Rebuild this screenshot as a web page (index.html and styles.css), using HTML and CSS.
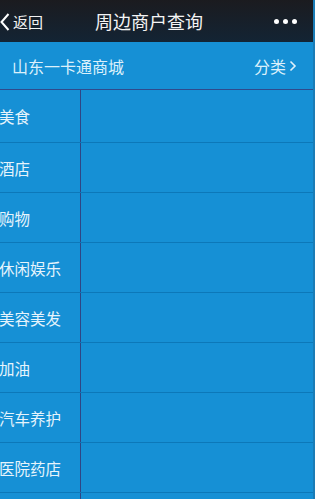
FILE: index.html
```html
<!DOCTYPE html>
<html lang="zh">
<head>
<meta charset="utf-8">
<link rel="stylesheet" href="styles.css">
</head>
<body>
<div class="app">
  <header class="topbar">
    <div class="back">
      <svg class="chev" width="10" height="20" viewBox="0 0 10 20"><path d="M8.5 2 L1.5 10 L8.5 18" fill="none" stroke="#fff" stroke-width="2"/></svg>
      <span>返回</span>
    </div>
    <div class="title">周边商户查询</div>
    <div class="more"><i></i><i></i><i></i></div>
  </header>
  <div class="subbar">
    <span class="shop">山东一卡通商城</span>
    <span class="cat">分类<svg width="8" height="12" viewBox="0 0 8 12"><path d="M1.5 1.5 L6 6 L1.5 10.5" fill="none" stroke="#dff1fb" stroke-width="1.6"/></svg></span>
  </div>
  <ul class="list">
    <li class="first"><span class="side">美食</span></li>
    <li><span class="side">酒店</span></li>
    <li><span class="side">购物</span></li>
    <li><span class="side">休闲娱乐</span></li>
    <li><span class="side">美容美发</span></li>
    <li><span class="side">加油</span></li>
    <li><span class="side">汽车养护</span></li>
    <li><span class="side">医院药店</span></li>
    <li><span class="side"></span></li>
  </ul>
</div>
</body>
</html>
```
FILE: styles.css
```css
html, body {
  margin: 0;
  padding: 0;
  background: #fff;
  height: 100%;
  overflow: hidden;
}
body {
  font-family: "Noto Sans CJK SC", "Noto Sans", sans-serif;
}
.app {
  width: 315px;
  height: 499px;
  background: #1690d5;
  box-sizing: border-box;
  border-right: 2px solid #1a7cb6;
  overflow: hidden;
}
.topbar {
  height: 42px;
  background: linear-gradient(#1b1b1f, #132434);
  display: flex;
  align-items: center;
  color: #fff;
  position: relative;
}
.back {
  display: flex;
  align-items: center;
  gap: 3px;
  font-size: 15px;
  color: #f2f2f2;
}
.chev {
  margin-top: 1px;
}
.title {
  position: absolute;
  left: 95px;
  top: 0;
  line-height: 42px;
  font-size: 18px;
  color: #f4f4f4;
}
.more {
  margin-left: auto;
  margin-right: 16px;
  display: flex;
  gap: 4px;
}
.more i {
  width: 5px;
  height: 5px;
  border-radius: 50%;
  background: #fff;
}
.subbar {
  height: 47px;
  display: flex;
  align-items: center;
  justify-content: space-between;
  padding: 0 16px 0 12px;
  color: #dcf0fb;
  font-size: 16px;
}
.cat {
  display: flex;
  align-items: center;
  gap: 3px;
}
.list {
  list-style: none;
  margin: 0;
  padding: 0;
  border-top: 1px solid #2f4a8c;
}
.list li {
  height: 49px;
  border-bottom: 1px solid #0c78b9;
  display: flex;
}
.list li.first {
  height: 52px;
}
.side {
  width: 82px;
  border-right: 1px solid #2f4584;
  display: flex;
  align-items: center;
  font-size: 15.5px;
  color: #e6f4fc;
  margin-left: -1px;
  box-sizing: border-box;
  white-space: nowrap;
}
```
